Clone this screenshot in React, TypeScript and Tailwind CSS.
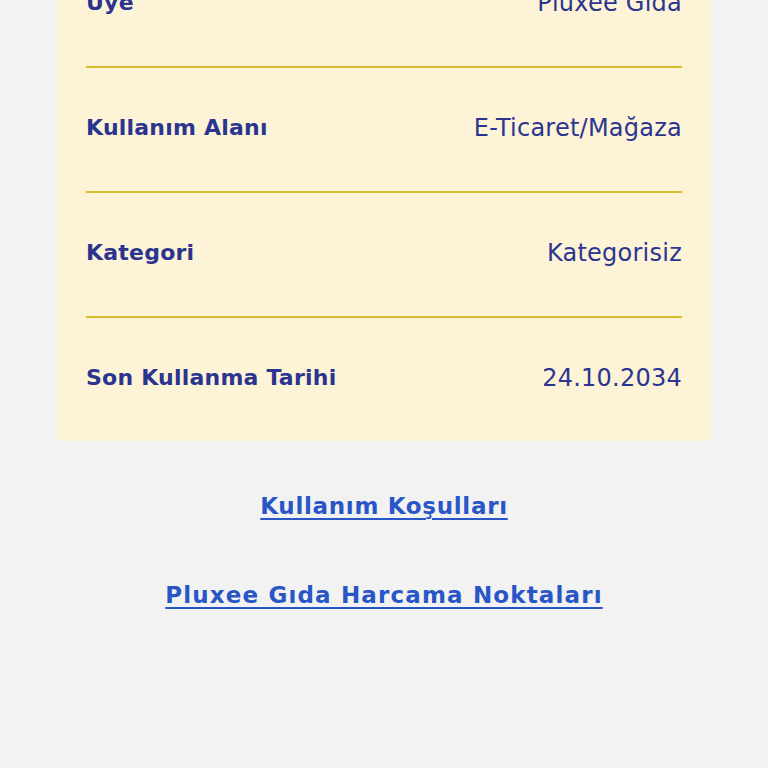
import React from "react";

const rows: { label: string; value: string }[] = [
  { label: "Üye", value: "Pluxee Gıda" },
  { label: "Kullanım Alanı", value: "E-Ticaret/Mağaza" },
  { label: "Kategori", value: "Kategorisiz" },
  { label: "Son Kullanma Tarihi", value: "24.10.2034" },
];

export default function App() {
  return (
    <div
      className="min-h-[768px] w-[768px] overflow-hidden bg-[#f2f2f2]"
      style={{ fontFamily: '"DejaVu Sans", "Liberation Sans", sans-serif' }}
    >
      <div className="mx-[57px] -mt-[57px] bg-[#fdf3d7] px-[29px]">
        {rows.map((r, i) => (
          <div
            key={r.label}
            className={
              i < rows.length - 1
                ? "flex h-[125px] items-center justify-between border-b-2 border-[#d8bc30] pb-[4px]"
                : "flex h-[123px] items-center justify-between pb-[4px]"
            }
          >
            <span className="text-[22px] font-bold leading-none tracking-[0.01em] text-[#2b3590]">
              {r.label}
            </span>
            <span className="text-[24px] leading-none tracking-[0.01em] text-[#2b3590]">
              {r.value}
            </span>
          </div>
        ))}
      </div>
      <div className="flex flex-col items-center pt-[50px]">
        <a
          href="#"
          className="text-[23px] font-bold leading-[30px] tracking-[0.03em] text-[#2856c7] underline decoration-2 underline-offset-4"
        >
          Kullanım Koşulları
        </a>
        <a
          href="#"
          className="mt-[59px] text-[23px] font-bold leading-[30px] tracking-[0.05em] text-[#2856c7] underline decoration-2 underline-offset-4"
        >
          Pluxee Gıda Harcama Noktaları
        </a>
      </div>
    </div>
  );
}
